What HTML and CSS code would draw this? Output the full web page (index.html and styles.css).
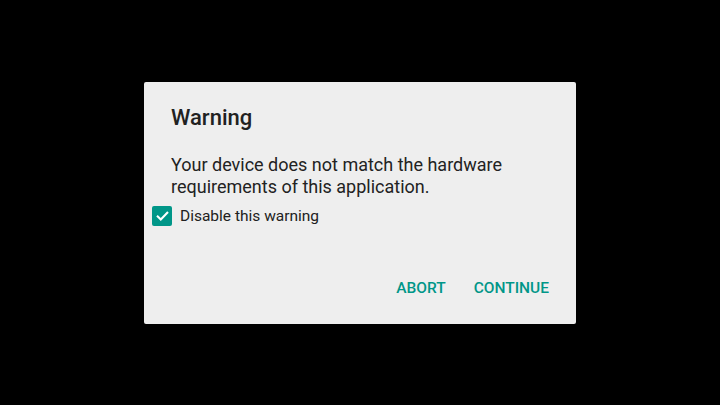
FILE: index.html
```html
<!DOCTYPE html>
<html>
<head>
<meta charset="utf-8">
<link rel="stylesheet" href="styles.css">
</head>
<body>
<div class="screen">
  <div class="dialog">
    <h1 class="title">Warning</h1>
    <p class="message">Your device does not match the hardware<br>requirements of this application.</p>
    <label class="check">
      <span class="box">
        <svg width="20" height="20" viewBox="0 0 20 20"><path d="M5 9.8 L8.8 13.5 L16 6" fill="none" stroke="#ffffff" stroke-width="2.1"/></svg>
      </span>
      <span class="check-label">Disable this warning</span>
    </label>
    <div class="actions">
      <span class="btn">ABORT</span>
      <span class="btn">CONTINUE</span>
    </div>
  </div>
</div>
</body>
</html>
```
FILE: styles.css
```css
html, body {
  margin: 0;
  padding: 0;
  background: #000;
}
.screen {
  width: 720px;
  height: 405px;
  display: flex;
  align-items: center;
  justify-content: center;
  font-family: Roboto, "Liberation Sans", sans-serif;
}
.dialog {
  width: 432px;
  height: 242px;
  box-sizing: border-box;
  background: #eeeeee;
  border-radius: 2px;
  display: flex;
  flex-direction: column;
  padding: 0 0 0 27px;
}
.title {
  margin: 23px 0 0 0;
  font-size: 22px;
  font-weight: 500;
  line-height: 26px;
  color: #212121;
}
.message {
  margin: 23.5px 0 0 0;
  font-size: 18px;
  line-height: 22px;
  color: #222222;
}
.check {
  display: flex;
  align-items: center;
  margin: 7.5px 0 0 -19px;
}
.box {
  width: 20px;
  height: 20px;
  border-radius: 2px;
  background: #009688;
  display: block;
}
.box svg { display: block; }
.check-label {
  margin-left: 8px;
  font-size: 15.5px;
  color: #212121;
}
.actions {
  margin-top: auto;
  display: flex;
  justify-content: flex-end;
  gap: 28px;
  padding: 0 27px 28px 0;
}
.btn {
  font-size: 15.5px;
  font-weight: 500;
  color: #009688;
  line-height: 16px;
}
```
